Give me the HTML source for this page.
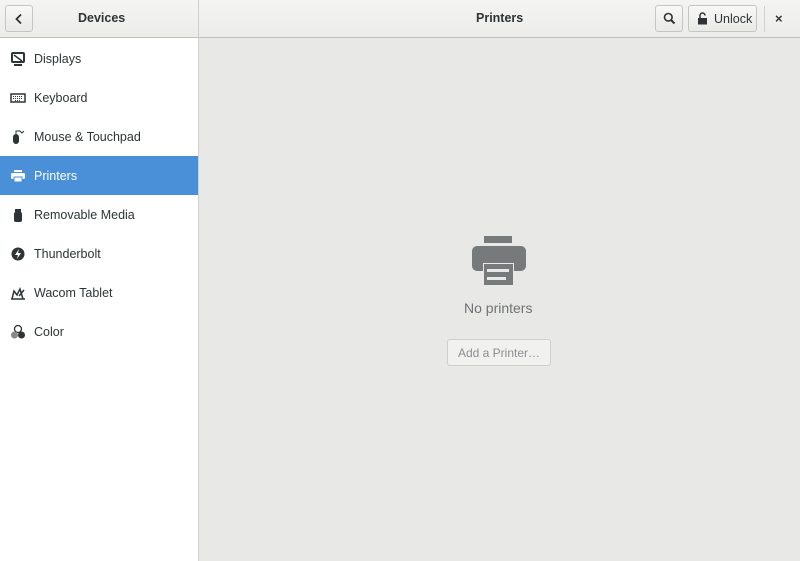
<!DOCTYPE html>
<html><head><meta charset="utf-8"><style>
*{box-sizing:border-box;margin:0;padding:0}
body{width:800px;height:561px;overflow:hidden;font-family:"Liberation Sans","DejaVu Sans",sans-serif;font-size:12.5px;color:#2e3436;background:#e8e8e7;position:relative}
.hdr{position:absolute;left:0;top:0;width:800px;height:38px;background:linear-gradient(#f4f4f3,#ececea);border-bottom:1px solid #bfbfbc}
.vsep{position:absolute;left:198px;top:0;width:1px;height:561px;background:#cfcfcc}
.side{position:absolute;left:0;top:38px;width:198px;height:523px;background:#fff;padding-top:1px}
.row{height:39px;display:flex;align-items:center;padding-left:10px}
.row svg{width:16px;height:16px;margin-right:8px}
.row.sel{background:#4a90d9;color:#fff}
.btn{position:absolute;border:1px solid #c5c5c2;border-radius:3px;background:linear-gradient(#f8f8f7,#e9e9e7);display:flex;align-items:center;justify-content:center}
.t{position:absolute;font-weight:bold;font-size:12.5px}
</style></head><body>
<div class="hdr"></div>
<div class="btn" style="left:5px;top:5px;width:28px;height:27px"><svg width="10" height="12" viewBox="0 0 10 12"><path d="M7 1.5 2.5 6 7 10.5" fill="none" stroke="#2e3436" stroke-width="1.8"/></svg></div>
<div class="t" style="left:78px;top:11px">Devices</div>
<div class="t" style="left:476px;top:11px">Printers</div>
<div class="btn" style="left:655px;top:5px;width:28px;height:27px"><svg width="13" height="13" viewBox="0 0 13 13"><circle cx="5.3" cy="5.3" r="3.8" fill="none" stroke="#2e3436" stroke-width="1.6"/><path d="M8 8l3.5 3.5" stroke="#2e3436" stroke-width="2"/></svg></div>
<div class="btn" style="left:688px;top:5px;width:69px;height:27px;justify-content:flex-start;padding-left:9px"><svg width="10" height="13" viewBox="0 0 10 13"><path d="M2 6V3.5a2.5 2.5 0 0 1 5 0" fill="none" stroke="#2e3436" stroke-width="1.5"/><rect x="0" y="6" width="9" height="6.5" fill="#2e3436"/></svg><span style="margin-left:6px;color:#2e3436">Unlock</span></div>
<div style="position:absolute;left:764px;top:6px;width:1px;height:26px;background:#d3d3d0"></div>
<div style="position:absolute;left:775px;top:11px;font-weight:bold;font-size:13px">×</div>
<div class="vsep"></div>
<div class="side">
<div class="row"><svg viewBox="0 0 16 16"><rect x="2" y="2" width="12" height="9" rx="1" fill="none" stroke="#2e3436" stroke-width="2"/><path d="M4 4l8 6" stroke="#2e3436" stroke-width="1.5"/><rect x="4" y="13" width="8" height="2" fill="#2e3436"/></svg>Displays</div>
<div class="row"><svg viewBox="0 0 16 16"><rect x="1" y="4" width="14" height="8" fill="none" stroke="#2e3436" stroke-width="1.5"/><path d="M3 6.5h10M3 8.5h10M5 10.5h6" stroke="#2e3436" stroke-width="1" stroke-dasharray="1 1"/></svg>Keyboard</div>
<div class="row"><svg viewBox="0 0 16 16"><rect x="3" y="5" width="6" height="10" rx="3" fill="#2e3436"/><path d="M6 5V2h4l2 2 2-2" fill="none" stroke="#2e3436" stroke-width="1"/></svg>Mouse &amp; Touchpad</div>
<div class="row sel"><svg viewBox="0 0 16 16"><rect x="4" y="2" width="8" height="2" fill="#fff"/><rect x="1" y="5" width="14" height="6" rx="1.5" fill="#fff"/><rect x="4" y="9" width="8" height="5" fill="#fff" stroke="#4a90d9" stroke-width="1"/></svg>Printers</div>
<div class="row"><svg viewBox="0 0 16 16"><rect x="5" y="2" width="6" height="3" fill="#2e3436"/><rect x="4" y="5" width="8" height="10" rx="2" fill="#2e3436"/></svg>Removable Media</div>
<div class="row"><svg viewBox="0 0 16 16"><circle cx="8" cy="8" r="6.5" fill="#2e3436"/><path d="M9 3 5 9h3l-1 4 4-6H8z" fill="#fff"/></svg>Thunderbolt</div>
<div class="row"><svg viewBox="0 0 16 16"><path d="M1 14h14M2 14l2-8 3 4 3-6 3 10" fill="none" stroke="#2e3436" stroke-width="1.5"/><path d="M9 11l5-6" stroke="#2e3436" stroke-width="1.5"/></svg>Wacom Tablet</div>
<div class="row"><svg viewBox="0 0 16 16"><circle cx="8" cy="5" r="3.5" fill="none" stroke="#2e3436" stroke-width="1.3"/><circle cx="4.5" cy="11" r="3.5" fill="#888"/><circle cx="11.5" cy="11" r="3.5" fill="#2e3436"/></svg>Color</div>
</div>
<svg style="position:absolute;left:472px;top:236px" width="54" height="50" viewBox="0 0 54 50">
<rect x="12" y="0" width="28" height="7" fill="#777a7b"/>
<rect x="0" y="10" width="54" height="25" rx="5" fill="#777a7b"/>
<rect x="11" y="27" width="31" height="23" fill="#e8e8e7"/>
<rect x="12" y="28" width="29" height="21" fill="#777a7b"/>
<rect x="15" y="33" width="22" height="3" fill="#e8e8e7"/>
<rect x="15" y="41" width="19" height="3" fill="#e8e8e7"/>
</svg>
<div style="position:absolute;left:464px;top:300px;font-size:14px;color:#6f7374">No printers</div>
<div class="btn" style="left:447px;top:339px;width:104px;height:27px;background:#f1f1f0;border-color:#cfcfcc;color:#8b8e8f;font-size:12px">Add a Printer…</div>
</body></html>
